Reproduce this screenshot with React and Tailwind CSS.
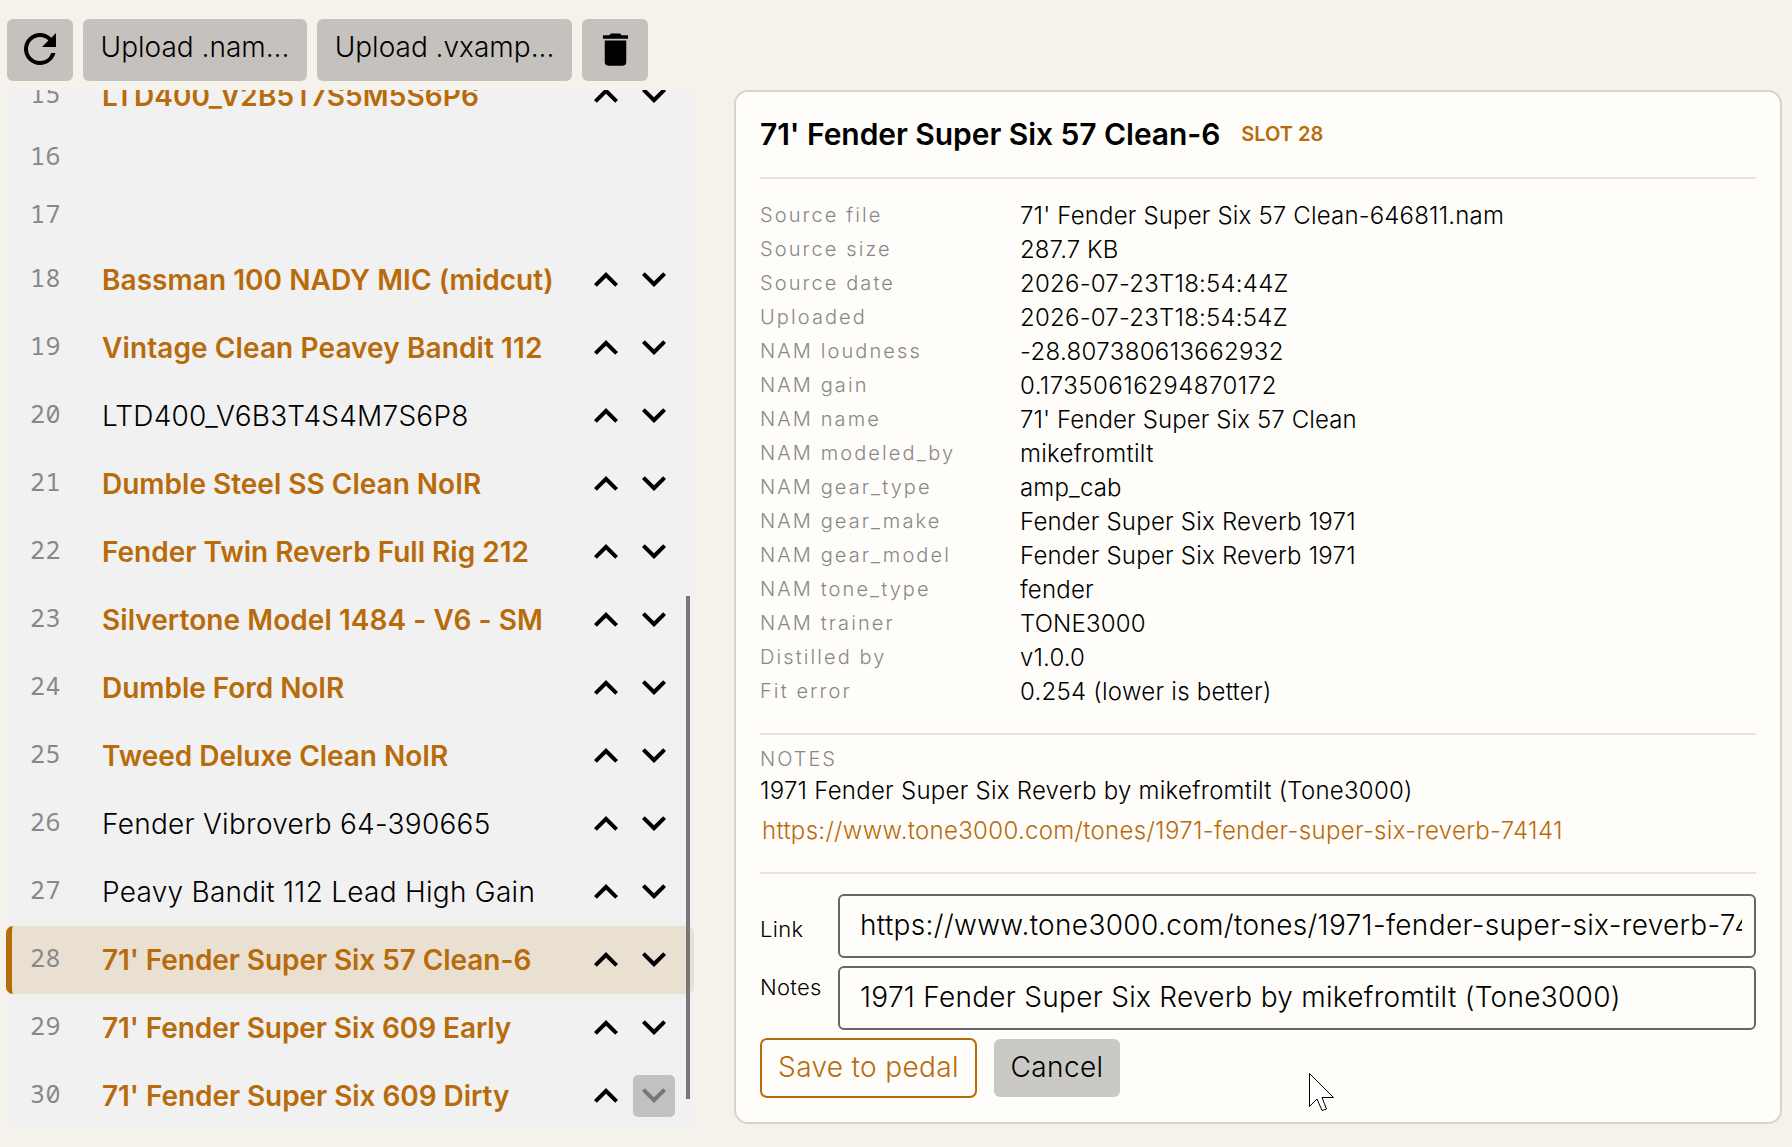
import React from "react";

const UI = "font-[Inter,sans-serif]";

const rows = [
  { n: 15, name: "LTD400_V2B5T7S5M5S6P6", on: true, track: "tracking-[0.1px]" },
  { n: 16 },
  { n: 17 },
  { n: 18, name: "Bassman 100 NADY MIC (midcut)", on: true, track: "tracking-[0.05px]" },
  { n: 19, name: "Vintage Clean Peavey Bandit 112", on: true, track: "tracking-[0.1px]" },
  { n: 20, name: "LTD400_V6B3T4S4M7S6P8", track: "tracking-[0.23px]" },
  { n: 21, name: "Dumble Steel SS Clean NoIR", on: true },
  { n: 22, name: "Fender Twin Reverb Full Rig 212", on: true },
  { n: 23, name: "Silvertone Model 1484 - V6 - SM", on: true, track: "tracking-[0.06px]" },
  { n: 24, name: "Dumble Ford NoIR", on: true, track: "tracking-[-0.04px]" },
  { n: 25, name: "Tweed Deluxe Clean NoIR", on: true, track: "tracking-[-0.04px]" },
  { n: 26, name: "Fender Vibroverb 64-390665", track: "tracking-[0.27px]" },
  { n: 27, name: "Peavy Bandit 112 Lead High Gain", track: "tracking-[0.27px]" },
  { n: 28, name: "71' Fender Super Six 57 Clean-6", on: true, selected: true, track: "tracking-[-0.07px]" },
  { n: 29, name: "71' Fender Super Six 609 Early", on: true, track: "tracking-[-0.08px]" },
  { n: 30, name: "71' Fender Super Six 609 Dirty", on: true, last: true, track: "tracking-[-0.06px]" },
];

const details = [
  ["Source file", "71' Fender Super Six 57 Clean-646811.nam", "tracking-[0.17px]"],
  ["Source size", "287.7 KB", "tracking-[0.1px]"],
  ["Source date", "2026-07-23T18:54:44Z", "tracking-[0.23px]"],
  ["Uploaded", "2026-07-23T18:54:54Z", "tracking-[0.23px]"],
  ["NAM loudness", "-28.807380613662932", "tracking-[0.36px]"],
  ["NAM gain", "0.17350616294870172", "tracking-[0.48px]"],
  ["NAM name", "71' Fender Super Six 57 Clean", "tracking-[0.1px]"],
  ["NAM modeled_by", "mikefromtilt", "tracking-[0.28px]"],
  ["NAM gear_type", "amp_cab", "tracking-[0.16px]"],
  ["NAM gear_make", "Fender Super Six Reverb 1971", "tracking-[0.22px]"],
  ["NAM gear_model", "Fender Super Six Reverb 1971", "tracking-[0.22px]"],
  ["NAM tone_type", "fender", "tracking-[0.18px]"],
  ["NAM trainer", "TONE3000", "tracking-[0.17px]"],
  ["Distilled by", "v1.0.0", "tracking-[0.15px]"],
  ["Fit error", "0.254 (lower is better)", "tracking-[0.26px]"],
];

const Chevron = ({ up }) => (
  <svg viewBox="0 0 24 24" className={up ? "size-12 shrink-0 rotate-180" : "size-12 shrink-0"} fill="currentColor">
    <path d="M16.59 8.59 12 13.17 7.41 8.59 6 10l6 6 6-6z" />
  </svg>
);

const ToolButton = ({ children, className }) => (
  <button className={"flex h-[62px] items-center justify-center rounded-[6px] bg-[#c5c2bd] " + className}>{children}</button>
);

function SlotRow({ row }) {
  const filled = Boolean(row.name);
  return (
    <div
      className={
        "flex shrink-0 items-center border-l-[6px] " +
        (filled ? "h-[68px] " : "h-[58px] pb-[1px] ") +
        (row.selected ? "rounded-[7px] border-[#b86b0b] bg-[#e9e0d1]" : "border-transparent")
      }
    >
      <span className="ml-[18px] w-[72px] pb-[6px] font-['Noto_Sans_Mono','DejaVu_Sans_Mono',monospace] text-[25px] leading-none tracking-[0.4px] text-[#888]">{row.n}</span>
      {filled && (
        <>
          <span className={"grow whitespace-nowrap text-[28px] " + (row.track || "tracking-normal") + (row.on ? " font-semibold text-[#b86b0b]" : " font-[350] text-black")}>{row.name}</span>
          <button className="mr-[6px] flex size-[42px] items-center justify-center"><Chevron up /></button>
          <button className={"mr-[19px] flex size-[42px] items-center justify-center rounded-[5px] pb-[2px] " + (row.last ? "bg-[#c1c1c1] text-[#777]" : "")}>
            <Chevron />
          </button>
        </>
      )}
    </div>
  );
}

function Field({ label, value, className, track }) {
  return (
    <div className="flex">
      <label className={"w-[78px] shrink-0 text-[22px] font-[350] leading-[30px] tracking-[0.3px] " + className}>{label}</label>
      <div className="flex h-[64px] min-w-0 grow items-center rounded-[6px] border-2 border-[#666] px-[12px] pb-[2px]">
        <div className={"w-full overflow-hidden whitespace-nowrap pl-[8px] text-[28px] font-[350] " + track}>{value}</div>
      </div>
    </div>
  );
}

export default function App() {
  return (
    <div className={UI + " relative flex h-[1147px] w-[1792px] flex-col overflow-hidden bg-[#f5f2eb] text-black"}>
      <div className="flex h-[90px] shrink-0 gap-[10px] pl-[7px] pt-[19px]">
        <ToolButton className="w-[66px] pb-[2px]">
          <svg viewBox="0 0 24 24" className="size-[48px]" fill="currentColor">
            <path d="M17.65 6.35A7.958 7.958 0 0 0 12 4a8 8 0 0 0-8 8 8 8 0 0 0 8 8c3.73 0 6.84-2.55 7.73-6h-2.08A5.99 5.99 0 0 1 12 18a6 6 0 0 1-6-6 6 6 0 0 1 6-6c1.66 0 3.14.69 4.22 1.78L13 11h7V4z" />
          </svg>
        </ToolButton>
        <ToolButton className="w-[224px] pb-[6px] text-[28px] font-[350]">Upload .nam...</ToolButton>
        <ToolButton className="w-[255px] pb-[6px] text-[28px] font-[350]">Upload .vxamp...</ToolButton>
        <ToolButton className="w-[66px] pb-[2px]">
          <svg viewBox="0 0 24 24" className="size-[43px]" fill="currentColor">
            <path d="M19 4h-3.500l-1-1h-5l-1 1H5v2h14M6 19a2 2 0 0 0 2 2h8a2 2 0 0 0 2-2V7H6z" />
          </svg>
        </ToolButton>
      </div>
      <div className="flex grow">
        <div className="relative ml-[6px] flex h-[1040px] w-[688px] shrink-0 flex-col justify-end overflow-hidden bg-[#f1f1f1]">
          {rows.map((r) => <SlotRow key={r.n} row={r} />)}
          <div className="absolute left-[680px] top-[506px] h-[503px] w-[4px] bg-[#777]" />
        </div>
        <div className="ml-[40px] flex h-[1034px] w-[1048px] flex-col rounded-[14px] border-2 border-[#dcd3c6] bg-[#fffdf9] px-[24px]">
          <div className="flex h-[87px] shrink-0 items-center gap-[21px] border-b-2 border-[#ebe4d6]">
            <h1 className="whitespace-nowrap text-[30px] font-semibold tracking-[-0.06px]">71' Fender Super Six 57 Clean-6</h1>
            <span className="whitespace-nowrap pb-[1px] text-[20px] font-semibold text-[#b86b0b]">SLOT 28</span>
          </div>
          <div className="flex flex-col pb-[24px] pt-[20px]">
            {details.map(([k, v, track]) => (
              <div key={k} className="flex h-[34px] items-center whitespace-nowrap">
                <span className="w-[260px] pb-[2px] text-[20px] font-light tracking-[2.1px] text-[#888]">{k}</span>
                <span className={"text-[24px] font-[350] " + track}>{v}</span>
              </div>
            ))}
          </div>
          <div className="flex flex-col whitespace-nowrap border-y-2 border-[#ebe4d6] pb-[24px] pt-[9px]">
            <span className="text-[20px] font-light leading-[30px] tracking-[2px] text-[#888]">NOTES</span>
            <span className="text-[24px] font-[350] leading-[34px] tracking-[0.25px]">1971 Fender Super Six Reverb by mikefromtilt (Tone3000)</span>
            <span className="mt-[6px] pl-[2px] text-[24px] font-[350] leading-[34px] tracking-[0.32px] text-[#b86b0b]">https://www.tone3000.com/tones/1971-fender-super-six-reverb-74141</span>
          </div>
          <div className="flex flex-col gap-[8px] pt-[20px]">
            <Field label="Link" value="https://www.tone3000.com/tones/1971-fender-super-six-reverb-74141" className="pt-[20px]" track="tracking-[0.34px]" />
            <Field label="Notes" value="1971 Fender Super Six Reverb by mikefromtilt (Tone3000)" className="pt-[6px]" track="tracking-[0.28px]" />
          </div>
          <div className="mt-[8px] flex items-center gap-[17px] text-[28px] font-[350] tracking-[0.35px]">
            <button className="flex h-[60px] w-[217px] items-center justify-center rounded-[7px] border-2 border-[#b86b0b] pb-[3px] text-[#b86b0b]">Save to pedal</button>
            <button className="flex h-[58px] w-[126px] items-center justify-center rounded-[6px] bg-[#cac9c5] pb-[3px]">Cancel</button>
          </div>
        </div>
      </div>
      <svg viewBox="0 0 26 40" className="absolute left-[1309px] top-[1073px] h-[40px] w-[26px]" fill="#fff" stroke="#000">
        <path d="M.5.5v33l7.500-7.500 5 11.500 4.500-1.500-4.500-11.500h11.500z" />
      </svg>
    </div>
  );
}
